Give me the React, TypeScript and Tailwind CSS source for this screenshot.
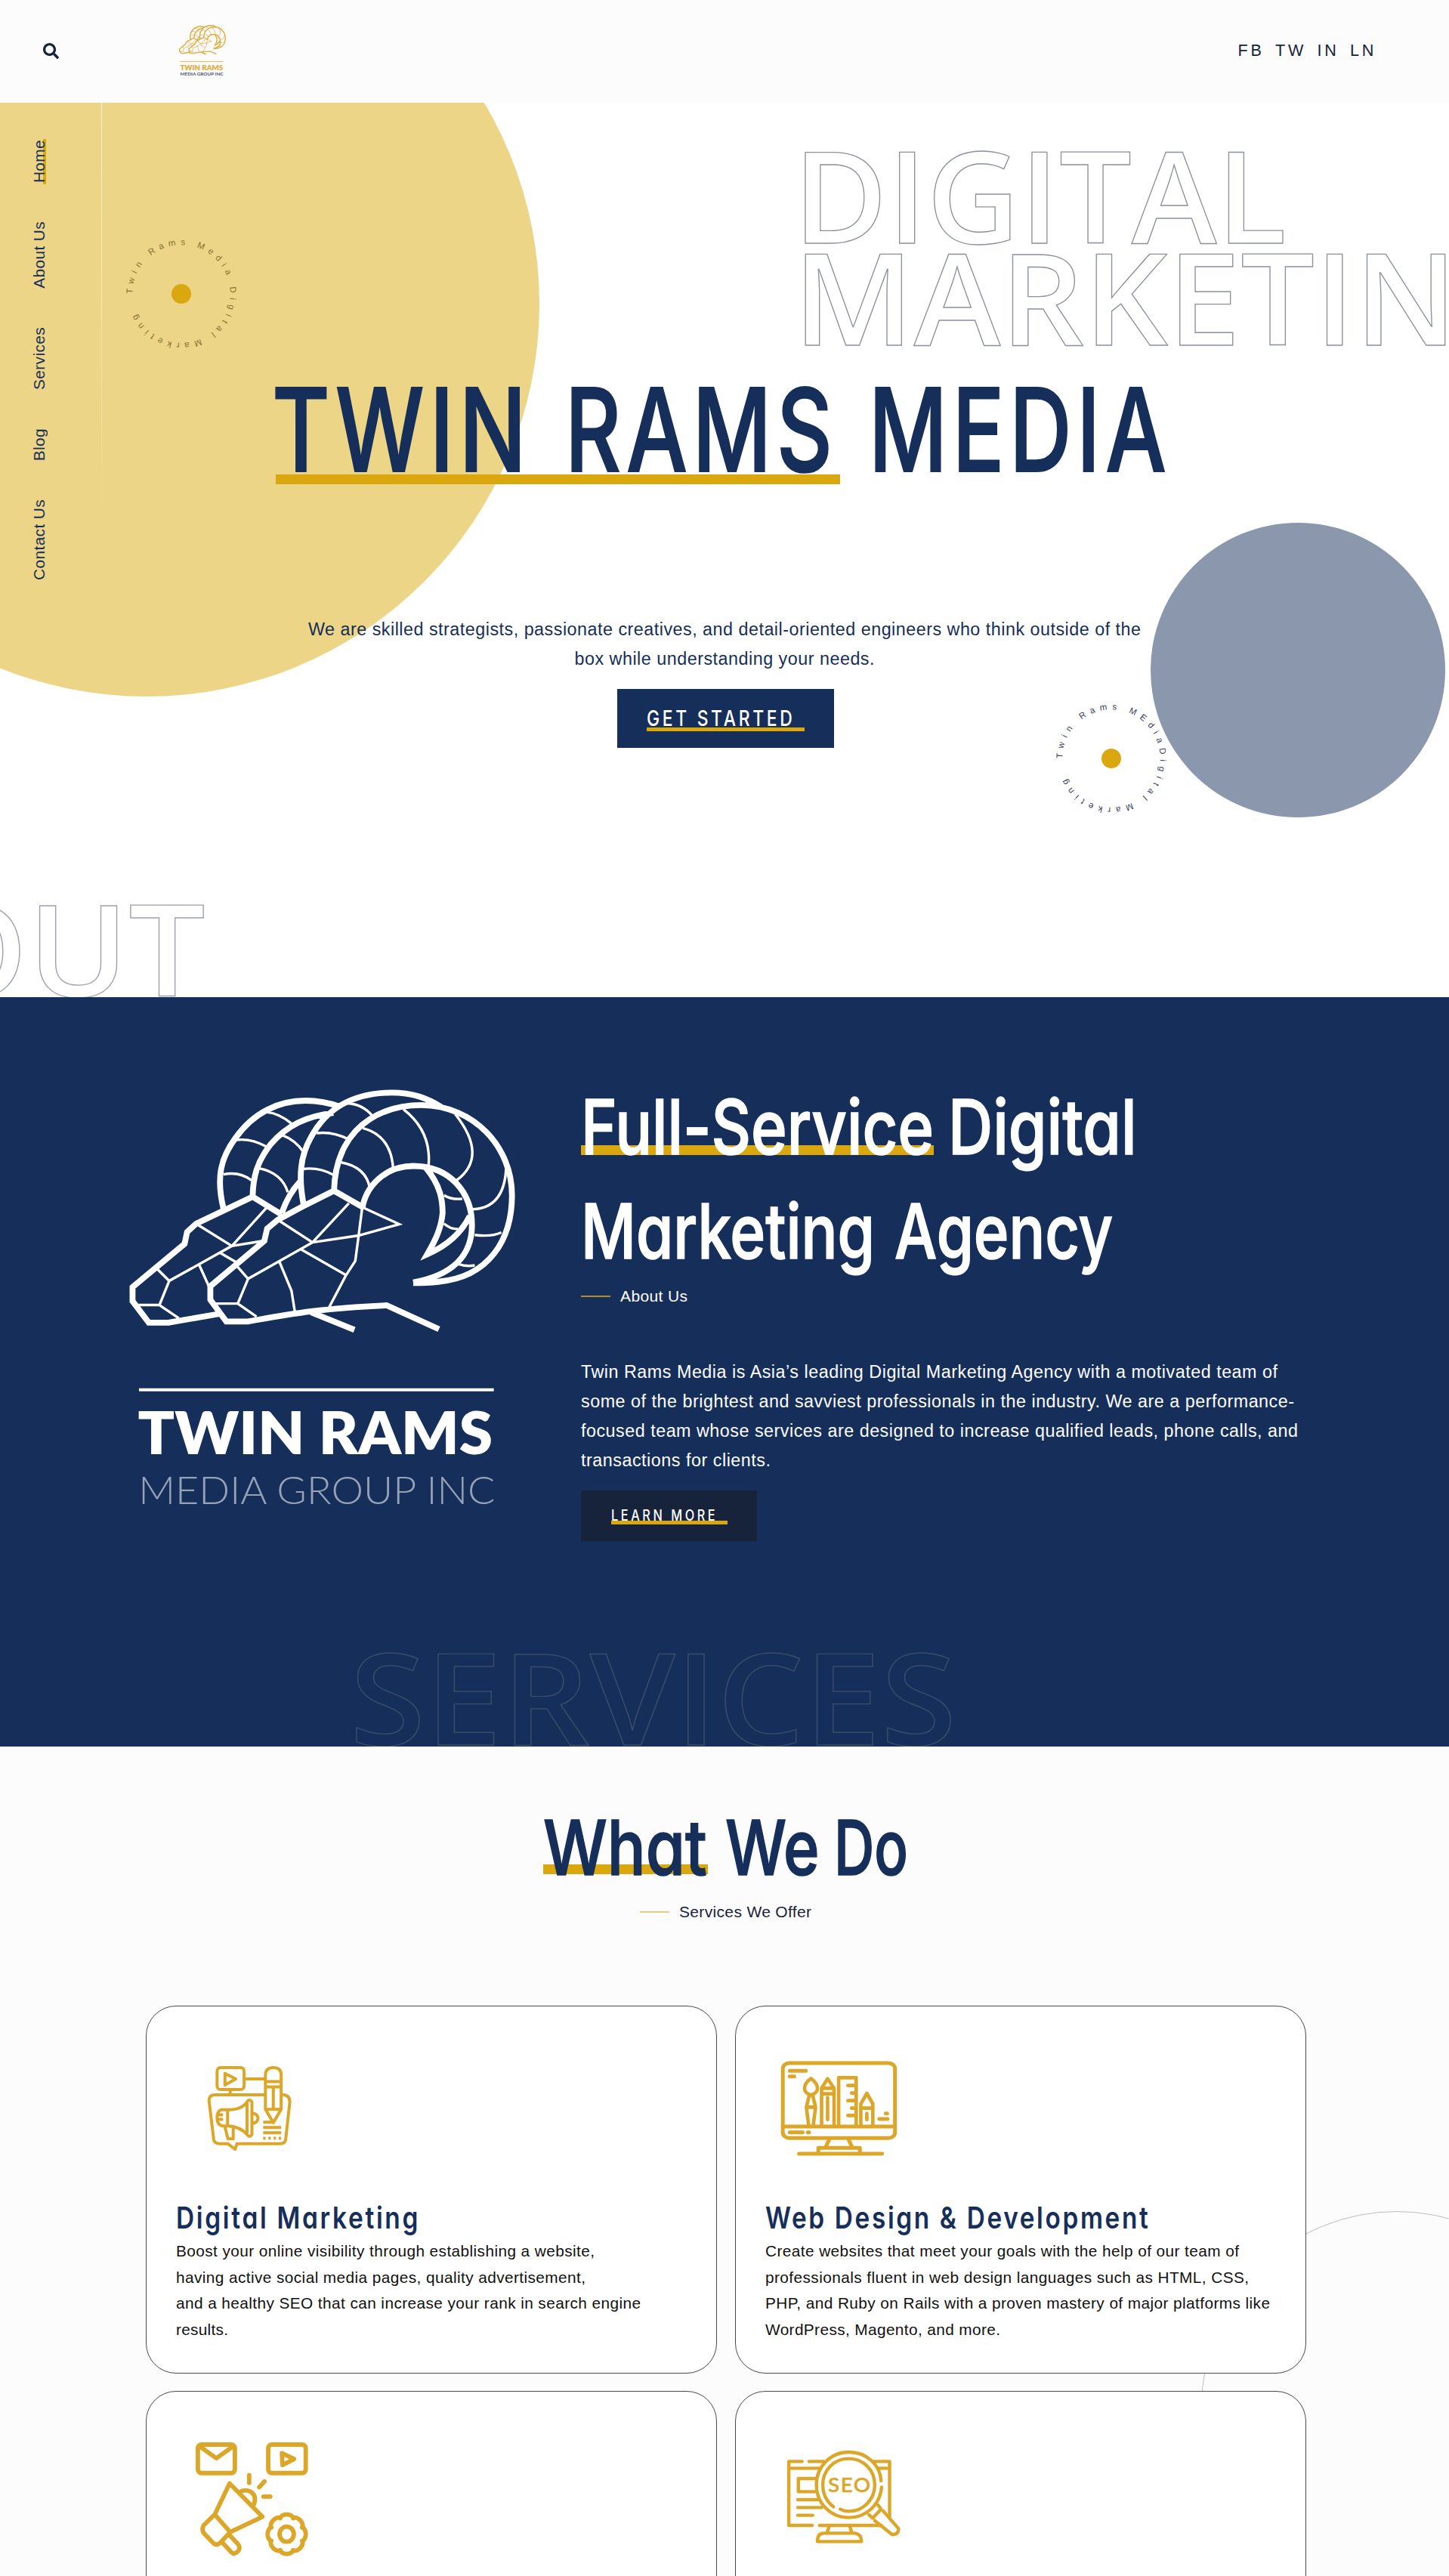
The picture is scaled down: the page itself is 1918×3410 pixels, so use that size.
import { useLayoutEffect, useRef, useState, type ReactNode } from "react";
import { FaSearch } from "react-icons/fa";

const DISPLAY = "font-['Inter',sans-serif] [font-feature-settings:'cv11']";
const BODY = "font-['Liberation_Sans',Arial,sans-serif]";

/* One line of condensed display text, squeezed horizontally to a given width. */
function Squeeze({ width, className = "", children }: { width: number; className?: string; children: ReactNode }) {
  const ref = useRef<HTMLSpanElement>(null);
  const [scale, setScale] = useState(1);
  useLayoutEffect(() => {
    const el = ref.current;
    if (!el) return;
    const tracking = parseFloat(getComputedStyle(el).letterSpacing) || 0;
    setScale(width / (el.offsetWidth - tracking));
  }, [width]);
  return (
    <span className="block shrink-0" style={{ width }}>
      <span
        ref={ref}
        className={`inline-block origin-left whitespace-nowrap align-top ${className}`}
        style={{ transform: `scaleX(${scale})` }}
      >
        {children}
      </span>
    </span>
  );
}

/* One line of body text, tracked out to a given width. */
function Line({ width, children }: { width: number; children: string }) {
  const ref = useRef<HTMLSpanElement>(null);
  const [tracking, setTracking] = useState(0);
  useLayoutEffect(() => {
    const el = ref.current;
    if (!el) return;
    el.style.letterSpacing = "0px";
    const t = (width - el.getBoundingClientRect().width) / (children.length - 1);
    el.style.letterSpacing = `${t}px`;
    setTracking(t);
  }, [width, children]);
  return (
    <span className="block whitespace-nowrap" style={{ width }}>
      <span ref={ref} className="inline-block" style={{ letterSpacing: tracking }}>
        {children}
      </span>
    </span>
  );
}

const RAM_THICK = [
  "M422 505 C395 400 412 335 465 268 C530 182 620 143 715 143 C760 143 800 150 840 164",
  "M526 465 C528 400 540 350 590 290 C650 225 720 195 815 184",
  "M708 490 C690 400 695 330 735 265 C790 170 880 118 1020 116 C1100 116 1150 135 1200 164",
  "M817 445 C820 330 870 250 945 205 C1000 172 1060 158 1130 158 C1320 160 1453 300 1453 460 C1453 610 1370 735 1190 750 C1160 753 1130 754 1100 754",
  "M918 505 C930 430 1000 362 1100 362 C1230 362 1310 450 1310 560 C1310 670 1230 730 1100 752",
  "M1145 368 C1200 430 1205 480 1205 520 C1200 570 1180 610 1150 658 C1220 630 1270 590 1302 530",
  "M925 503 L817 445 L700 500 L615 543 L578 572 L568 613 L375 765 L375 810 L432 883 L510 883 C650 860 750 840 1005 829 L1192 909",
  "M630 525 L526 465 L325 555 L292 583 L283 623 L97 768 L97 815 L155 887 L225 887 L410 857",
  "M735 852 L890 911",
  "M630 520 C645 480 665 445 695 415",
].join(" ");

const RAM_THIN = [
  "M620 545 L740 618 L510 740 L468 695 M740 618 L870 487 M740 618 L905 595 L1050 557 L925 503 M918 500 L905 595 L893 680 L860 728 L700 642 M860 728 L800 835 M622 683 L665 780 L677 850 M510 740 L473 823 L540 867 M390 823 H473",
  "M332 560 L452 630 L228 747 L185 707 M452 630 L575 503 M452 630 L570 612 M408 652 L468 685 M335 693 L372 770 M228 747 L193 828 L262 872 M118 828 H193",
  "M422 390 Q480 380 522 410 M465 275 Q520 268 575 297 M578 182 Q620 185 665 220 M550 370 Q630 385 652 450 M630 258 Q680 275 710 318",
  "M705 372 Q765 365 815 392 M755 252 Q810 245 868 272 M865 152 Q920 155 955 195",
  "M843 350 Q930 365 945 435 M920 235 Q1020 260 1028 368 M1065 172 Q1165 245 1155 358 M1250 188 Q1370 330 1255 410 M1432 370 Q1425 505 1310 507 M1320 593 Q1380 600 1415 585 M1260 690 Q1290 700 1320 695 M1210 460 Q1235 475 1275 472 M1210 555 Q1235 575 1260 573",
].join(" ");

function RamLogo({
  className,
  thick,
  thin,
  name,
  tagline,
  drop = 0,
}: {
  className: string;
  thick: number;
  thin: number;
  name: string;
  tagline: string;
  drop?: number;
}) {
  return (
    <svg viewBox="85 100 1385 1400" preserveAspectRatio="none" className={`overflow-visible ${className}`} fill="none" stroke={name}>
      <path d={RAM_THICK} strokeWidth={thick} vectorEffect="non-scaling-stroke" />
      <path d={RAM_THIN} strokeWidth={thin} vectorEffect="non-scaling-stroke" />
      <path d="M120 1112 H1388" strokeWidth={thin * 1.2} vectorEffect="non-scaling-stroke" />
      <g stroke="none" fontFamily="Lato, sans-serif">
        <text x="116" y={1327 + drop} fontSize="197" fontWeight="800" fill={name} textLength="1268" lengthAdjust="spacingAndGlyphs">
          TWIN RAMS
        </text>
        <text x="118" y={1494 + drop / 2} fontSize="130" fontWeight={drop ? 700 : 300} fill={tagline} textLength="1275" lengthAdjust="spacingAndGlyphs">
          MEDIA GROUP INC
        </text>
      </g>
    </svg>
  );
}

function RingBadge({ id, text, className }: { id: string; text: string; className: string }) {
  return (
    <svg viewBox="-80 -80 160 160" className={`absolute size-[160px] ${className}`}>
      <path id={id} d="M-64.8 0 A64.8 64.8 0 0 1 64.8 0 A64.8 64.8 0 0 1 -64.8 0" fill="none" />
      <text fontSize="11.5" fontFamily="Liberation Sans, Arial, sans-serif" fill="currentColor" textLength="379">
        <textPath href={`#${id}`} textLength="379">
          {text}
        </textPath>
      </text>
      <circle r="13" fill="#daa70f" />
    </svg>
  );
}

function CampaignIcon() {
  return (
    <svg viewBox="180 280 250 350" preserveAspectRatio="none" className="ml-[36px] mt-[37px] h-[117px] w-[124px]" fill="none" stroke="#dca629" strokeWidth="4" strokeLinejoin="round">
      <g>
        <rect x="217" y="295" width="72" height="87" rx="9" ry="14" vectorEffect="non-scaling-stroke" />
        <path vectorEffect="non-scaling-stroke" d="M238 318 L267 340 L238 364 Z M290 340 H344 M252 384 V402" />
        <path vectorEffect="non-scaling-stroke" d="M346 460 V325 Q346 295 367 295 Q388 295 388 325 V460 L367 513 Z M346 350 H388 M346 371 H388 M367 375 V460 M346 460 H388" />
        <path vectorEffect="non-scaling-stroke" d="M344 403 H212 Q193 403 196 432 L208 580 Q210 596 225 596 H245 L265 618 L270 596 H385 Q398 596 400 580 L411 432 Q411 403 392 403" />
        <path vectorEffect="non-scaling-stroke" d="M245 462 Q285 462 298 428 Q304 418 310 430 V560 Q304 573 298 562 Q280 528 245 526 H230 Q217 520 217 495 Q217 465 230 462 Z M245 462 V526 M297 435 V555 M312 475 Q326 480 326 495 Q326 512 312 517 M238 530 L246 577 H260 V530 M217 482 H233 M217 500 H233" />
        <path vectorEffect="non-scaling-stroke" d="M340 511 H367 M340 532 H388 M340 553 H388" />
        <path vectorEffect="non-scaling-stroke" strokeDasharray="3.2 3.7" d="M340 575 H388" />
      </g>
    </svg>
  );
}

function DesignIcon() {
  return (
    <svg viewBox="110 260 270 390" preserveAspectRatio="none" className="ml-[14px] mt-[31px] h-[130px] w-[165px]" fill="none" stroke="#dca629" strokeWidth="5" strokeLinecap="round" strokeLinejoin="round">
      <rect x="125" y="275" width="243" height="298" rx="14" ry="22" vectorEffect="non-scaling-stroke" />
      <path vectorEffect="non-scaling-stroke" d="M125 527 H368 M140 306 H175 M140 328 H150 M140 550 H168 M179 550 H182 M334 497 H352 M348 475 H351" />
      <path vectorEffect="non-scaling-stroke" d="M226 577 L218 608 M267 577 L275 608 M202 635 V612 H292 V635 M160 635 H340" />
      <path vectorEffect="non-scaling-stroke" strokeWidth="4.6" d="M186 336 Q172 355 172 375 Q172 395 186 402 Q200 395 200 375 Q200 355 186 336 Z M182 405 L176 450 L181 522 M190 405 L196 450 L191 522 M176 450 H196" />
      <path vectorEffect="non-scaling-stroke" strokeWidth="4.6" d="M209 522 V375 L222 337 L236 375 V522 M209 375 H236 M209 397 H236 M222 412 V500" />
      <path vectorEffect="non-scaling-stroke" strokeWidth="4.6" d="M246 522 V333 H284 V522 M266 364 H284 M274 394 H284 M266 424 H284 M274 454 H284 M266 483 H284" />
      <path vectorEffect="non-scaling-stroke" strokeWidth="4.6" d="M294 522 V437 L307 395 L320 437 V522 M294 454 H320 M307 475 V500" />
    </svg>
  );
}

const GEAR =
  Array.from({ length: 96 }, (_, i) => {
    const a = (i / 96) * Math.PI * 2;
    const r = 0.9 + 0.13 * Math.sqrt(Math.abs(Math.cos(4 * a)));
    return `${i ? "L" : "M"}${(285 + 35 * r * Math.sin(a)).toFixed(1)} ${(643 - 76 * r * Math.cos(a)).toFixed(1)}`;
  }).join(" ") + " Z";

function OutreachIcon() {
  return (
    <svg viewBox="100 270 240 470" preserveAspectRatio="none" className="ml-[17px] mt-[25px] h-[157px] w-[168px]" fill="none" stroke="#dca629" strokeWidth="5.8" strokeLinecap="round" strokeLinejoin="round">
      <rect x="117" y="288" width="70" height="113" rx="7" ry="14" vectorEffect="non-scaling-stroke" />
      <rect x="250" y="288" width="71" height="113" rx="7" ry="14" vectorEffect="non-scaling-stroke" />
      <path vectorEffect="non-scaling-stroke" d="M120 294 L152 342 L184 294 M276 322 L299 345 L277 369 Z" />
      <path vectorEffect="non-scaling-stroke" d="M214 409 V440 M243 434 L233 457 M241 494 H254" />
      <path vectorEffect="non-scaling-stroke" d="M177 442 L239 574 L178 635 L149 565 Z M149 565 L128 608 Q123 628 130 643 L146 678 Q152 690 159 678 L178 635" />
      <path vectorEffect="non-scaling-stroke" d="M164 678 L180 714 Q187 728 194 708 Q198 694 191 678 L176 645 M195 478 Q205 463 216 474 Q230 490 222 530" />
      <path vectorEffect="non-scaling-stroke" d={GEAR} />
      <ellipse cx="285" cy="643" rx="13.5" ry="30" vectorEffect="non-scaling-stroke" />
    </svg>
  );
}

function SeoIcon() {
  return (
    <svg viewBox="1220 300 235 390" preserveAspectRatio="none" className="ml-[22px] mt-[35px] h-[130px] w-[165px]" fill="none" stroke="#dca629" strokeWidth="4.4" strokeLinecap="round" strokeLinejoin="round">
      <path vectorEffect="non-scaling-stroke" d="M1258 355 H1233 V609 H1277 M1271 355 H1299 M1393 355 H1423 V575 M1291 609 H1407 M1233 382 H1291 M1402 382 H1423" />
      <path vectorEffect="non-scaling-stroke" d="M1283 423 H1251 V475 H1283 M1250 507 H1288 M1250 538 H1295 M1250 569 H1278" />
      <path vectorEffect="non-scaling-stroke" d="M1407 432 C1405 365 1378 318 1346 318 C1312 318 1285 375 1285 448 C1285 522 1312 578 1346 578 C1380 578 1405 525 1408 457" />
      <path vectorEffect="non-scaling-stroke" d="M1317 535 C1305 515 1297 484 1297 448 C1297 390 1318 344 1346 344 C1374 344 1395 390 1395 448 C1395 505 1374 553 1346 553 Q1337 553 1330 545" />
      <path vectorEffect="non-scaling-stroke" d="M1384 567 L1391 580 L1407 545 L1401 528 M1395 590 L1428 646 Q1440 645 1440 622 L1411 552" />
      <path vectorEffect="non-scaling-stroke" d="M1309 612 L1305 640 M1348 612 L1352 640 M1287 673 Q1287 640 1299 640 H1358 Q1370 645 1370 673 Z" />
      <text x="1307" y="477" fontSize="78" fontWeight="600" fontFamily="Lato, sans-serif" letterSpacing="4" fill="#dca629" stroke="#dca629" strokeWidth="1" textLength="82" lengthAdjust="spacingAndGlyphs">
        SEO
      </text>
    </svg>
  );
}

function ServiceCard({ icon, title, titleWidth, lines }: { icon: ReactNode; title?: string; titleWidth?: number; lines?: [string, number][] }) {
  return (
    <article className="flex h-[487px] flex-col rounded-[40px] border border-[#4a4a4a] bg-white px-[39px] pt-[39px]">
      <div className="h-[214px]">{icon}</div>
      {title && (
        <h3 className={`h-[54px] text-[40px] leading-[54px] font-semibold text-[#162e5a] ${DISPLAY}`}>
          <Squeeze width={titleWidth ?? 300} className="tracking-[0.08em]">
            {title}
          </Squeeze>
        </h3>
      )}
      {lines && (
        <p className={`text-[20.8px] leading-[34.6px] text-[#111] ${BODY}`}>
          {lines.map(([t, w]) => (
            <Line key={t} width={w}>
              {t}
            </Line>
          ))}
        </p>
      )}
    </article>
  );
}

const OUTLINE = "font-['Open_Sans',sans-serif] font-semibold text-transparent";

export default function App() {
  return (
    <div className="relative flex h-[3410px] w-[1918px] flex-col overflow-hidden bg-white">
      <header className="flex h-[136px] shrink-0 items-start bg-[#fcfcfc]">
        <FaSearch className="ml-[57px] mt-[57px] size-[21px] text-[#17233b]" />
        <RamLogo className="ml-[159px] mt-[33px] h-[67px] w-[62px]" thick={1.4} thin={0.7} name="#dfab3c" tagline="#4a5268" drop={30} />
        <nav className={`ml-auto mr-[96px] mt-[52px] flex gap-[14.5px] text-[21.6px] leading-[30px] tracking-[3.7px] text-[#17233b] ${BODY}`}>
          <a>FB</a>
          <a>TW</a>
          <a>IN</a>
          <a>LN</a>
        </nav>
      </header>

      <section className="relative flex h-[1184px] shrink-0 flex-col overflow-hidden">
        <div className="absolute left-[-326px] top-[-254px] size-[1040px] rounded-full bg-[#edd587]" />
        <div className="absolute left-[1523px] top-[556px] size-[390px] rounded-full bg-[#8b97ad]" />
        <div className="absolute left-[134px] top-0 h-[560px] w-px bg-linear-to-b from-white/70 to-transparent" />

        <aside className={`absolute left-[37px] top-[49px] flex flex-col gap-[51px] text-[20.8px] leading-[30px] tracking-[0.4px] text-[#162e5a] ${BODY}`}>
          <a className="relative w-[30px]">
            <span className="absolute left-[20px] top-[-1px] h-[60px] w-[4px] bg-[#daa70f]" />
            <span className="relative block rotate-180 [writing-mode:vertical-rl]">Home</span>
          </a>
          <a className="block rotate-180 [writing-mode:vertical-rl]">About Us</a>
          <a className="block rotate-180 [writing-mode:vertical-rl]">Services</a>
          <a className="block rotate-180 [writing-mode:vertical-rl]">Blog</a>
          <a className="block rotate-180 [writing-mode:vertical-rl]">Contact Us</a>
        </aside>

        <RingBadge id="ring-a" text="Twin Rams Media Digital Marketing" className="left-[160px] top-[173px] text-[#86702f]" />
        <RingBadge id="ring-b" text="Twin Rams MEdiaDigital Marketing" className="left-[1391px] top-[788px] text-[#39415c]" />

        <div className={`absolute left-[1050px] top-[53px] text-[168px] leading-[135px] [-webkit-text-stroke:1.3px_#8b929e] ${OUTLINE}`}>
          <Squeeze width={653}>DIGITAL</Squeeze>
          <Squeeze width={879}>MARKETIN</Squeeze>
        </div>
        <div className={`absolute left-[-105px] top-[1050px] text-[168px] leading-[135px] [-webkit-text-stroke:1.3px_#9ba1ad] ${OUTLINE}`}>
          <Squeeze width={377}>OUT</Squeeze>
        </div>

        <div className="relative flex flex-1 flex-col pt-[353px]">
          <h1 className={`relative flex h-[160px] pl-[360px] text-[152px] leading-[160px] font-medium text-[#162e5a] [-webkit-text-stroke:2px_#162e5a] ${DISPLAY}`}>
            <span className="absolute left-[365px] top-[139px] h-[13px] w-[747px] bg-[#daa70f]" />
            <span className="relative flex">
              <Squeeze width={337} className="tracking-[0.06em]">
                TWIN
              </Squeeze>
              <span className="w-[51px]" />
              <Squeeze width={354} className="tracking-[0.06em]">
                RAMS
              </Squeeze>
              <span className="w-[48px]" />
              <Squeeze width={394} className="tracking-[0.06em]">
                MEDIA
              </Squeeze>
            </span>
          </h1>
          <div className={`mt-[165px] flex flex-col items-center text-[23.3px] leading-[39px] text-[#162e5a] ${BODY}`}>
            <Line width={1102}>We are skilled strategists, passionate creatives, and detail-oriented engineers who think outside of the</Line>
            <Line width={397}>box while understanding your needs.</Line>
          </div>
          <a className={`relative ml-[817px] mt-[20px] flex h-[78px] w-[287px] items-center bg-[#162e5a] pl-[39px] text-[29px] leading-[40px] font-medium text-white ${DISPLAY}`}>
            <span className="absolute left-[39px] top-[51px] h-[5px] w-[209px] bg-[#daa70f]" />
            <span className="relative">
              <Squeeze width={193} className="tracking-[0.16em]">
                GET STARTED
              </Squeeze>
            </span>
          </a>
        </div>
      </section>

      <section className="relative flex h-[992px] shrink-0 overflow-hidden bg-[#162e5a]">
        <RamLogo className="ml-[171px] mt-[120px] h-[553px] w-[513px] shrink-0" thick={7.8} thin={3.4} name="#ffffff" tagline="#97a2b6" />
        <div className="ml-[85px] flex flex-col pt-[103px] text-white">
          <h2 className={`text-[100px] leading-[137.6px] font-medium [-webkit-text-stroke:1.6px_#ffffff] ${DISPLAY}`}>
            <span className="flex">
              <span className="relative mr-[19px] h-[138px]">
                <span className="absolute left-0 top-[93px] h-[13px] w-[467px] bg-[#daa70f]" />
                <span className="relative">
                  <Squeeze width={467}>Full-Service</Squeeze>
                </span>
              </span>
              <Squeeze width={250}>Digital</Squeeze>
            </span>
            <span className="flex gap-[26px]">
              <Squeeze width={389}>Marketing</Squeeze>
              <Squeeze width={289}>Agency</Squeeze>
            </span>
          </h2>
          <div className={`mt-[2px] flex h-[30px] items-center text-[21px] leading-[30px] ${BODY}`}>
            <span className="mr-[13px] h-[2px] w-[39px] bg-[#b38d22]" />
            <Line width={89}>About Us</Line>
          </div>
          <p className={`mt-[66px] text-[23.3px] leading-[39px] ${BODY}`}>
            <Line width={922}>Twin Rams Media is Asia’s leading Digital Marketing Agency with a motivated team of</Line>
            <Line width={944}>some of the brightest and savviest professionals in the industry. We are a performance-</Line>
            <Line width={949}>focused team whose services are designed to increase qualified leads, phone calls, and</Line>
            <Line width={251}>transactions for clients.</Line>
          </p>
          <a className={`relative mt-[20px] flex h-[67px] w-[233px] items-center bg-[#17233b] pl-[40px] text-[20px] leading-[30px] font-medium ${DISPLAY}`}>
            <span className="absolute left-[40px] top-[40px] h-[5px] w-[154px] bg-[#daa70f]" />
            <span className="relative">
              <Squeeze width={138} className="tracking-[0.22em]">
                LEARN MORE
              </Squeeze>
            </span>
          </a>
        </div>
        <div className={`absolute left-[463px] top-[857px] text-[168px] leading-[135px] [-webkit-text-stroke:1.4px_#3a4c67] ${OUTLINE}`}>
          <Squeeze width={803}>SERVICES</Squeeze>
        </div>
      </section>

      <section className="relative flex h-[1098px] shrink-0 flex-col overflow-hidden bg-[#fcfcfc]">
        <div className="absolute left-[1590px] top-[615px] size-[518px] rounded-full border border-[#bdbdbd]" />
        <h2 className={`flex h-[136px] pl-[719px] pt-[65px] text-[101px] leading-[136px] font-medium text-[#162e5a] [-webkit-text-stroke:1.6px_#162e5a] ${DISPLAY}`}>
          <span className="relative mr-[24px]">
            <span className="absolute left-0 top-[91px] h-[13px] w-[218px] bg-[#daa70f]" />
            <span className="relative">
              <Squeeze width={217}>What</Squeeze>
            </span>
          </span>
          <Squeeze width={125}>We</Squeeze>
          <span className="w-[19px]" />
          <Squeeze width={98}>Do</Squeeze>
        </h2>
        <div className={`mt-[68px] flex h-[30px] items-center pl-[847px] text-[21px] leading-[30px] text-[#17233b] ${BODY}`}>
          <span className="mr-[13px] h-[2px] w-[39px] bg-[#e6cd80]" />
          <Line width={175}>Services We Offer</Line>
        </div>
        <div className="relative mt-[109px] grid grid-cols-[756px_756px] gap-x-[24px] gap-y-[23px] pl-[193px]">
          <ServiceCard
            icon={<CampaignIcon />}
            title="Digital Marketing"
            titleWidth={320}
            lines={[
              ["Boost your online visibility through establishing a website,", 554],
              ["having active social media pages, quality advertisement,", 542],
              ["and a healthy SEO that can increase your rank in search engine", 615],
              ["results.", 69],
            ]}
          />
          <ServiceCard
            icon={<DesignIcon />}
            title="Web Design & Development"
            titleWidth={507}
            lines={[
              ["Create websites that meet your goals with the help of our team of", 627],
              ["professionals fluent in web design languages such as HTML, CSS,", 640],
              ["PHP, and Ruby on Rails with a proven mastery of major platforms like", 668],
              ["WordPress, Magento, and more.", 311],
            ]}
          />
          <ServiceCard icon={<OutreachIcon />} />
          <ServiceCard icon={<SeoIcon />} />
        </div>
      </section>
    </div>
  );
}
